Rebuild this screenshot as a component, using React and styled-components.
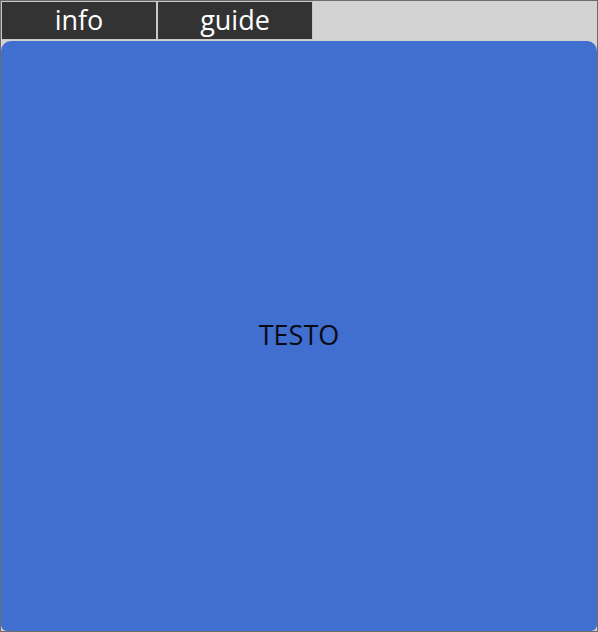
import React from "react"
import styled, { createGlobalStyle } from "styled-components"

const GlobalStyle = createGlobalStyle`
  html, body {
    margin: 0;
    padding: 0;
    background: #d3d3d3;
  }
  * {
    box-sizing: border-box;
  }
`

const Frame = styled.div`
  display: flex;
  flex-direction: column;
  width: 598px;
  height: 632px;
  border: 1px solid #6b6b6b;
  background: #d3d3d3;
  font-family: "Open Sans", "Noto Sans", sans-serif;
`

const TabBar = styled.nav`
  display: flex;
  flex-direction: row;
  height: 39px;
  margin-bottom: 1px;
`

const Tab = styled.button`
  width: 156px;
  height: 39px;
  padding: 0 0 2px;
  margin: 0;
  border: 1px solid #c8c8c8;
  background: #333333;
  color: #ffffff;
  font-family: inherit;
  font-size: 27px;
  line-height: 1;
  cursor: pointer;
`

const Panel = styled.main`
  flex: 1;
  display: flex;
  align-items: center;
  justify-content: center;
  background: #406fcf;
  border-radius: 10px 10px 6px 6px;
`

const Label = styled.span`
  color: #0a0a14;
  font-size: 27px;
  margin-top: -3px;
`

export default function App() {
  const tabs = ["info", "guide"]
  return (
    <>
      <GlobalStyle />
      <Frame>
        <TabBar>
          {tabs.map(name => (
            <Tab key={name}>{name}</Tab>
          ))}
        </TabBar>
        <Panel>
          <Label>TESTO</Label>
        </Panel>
      </Frame>
    </>
  )
}
